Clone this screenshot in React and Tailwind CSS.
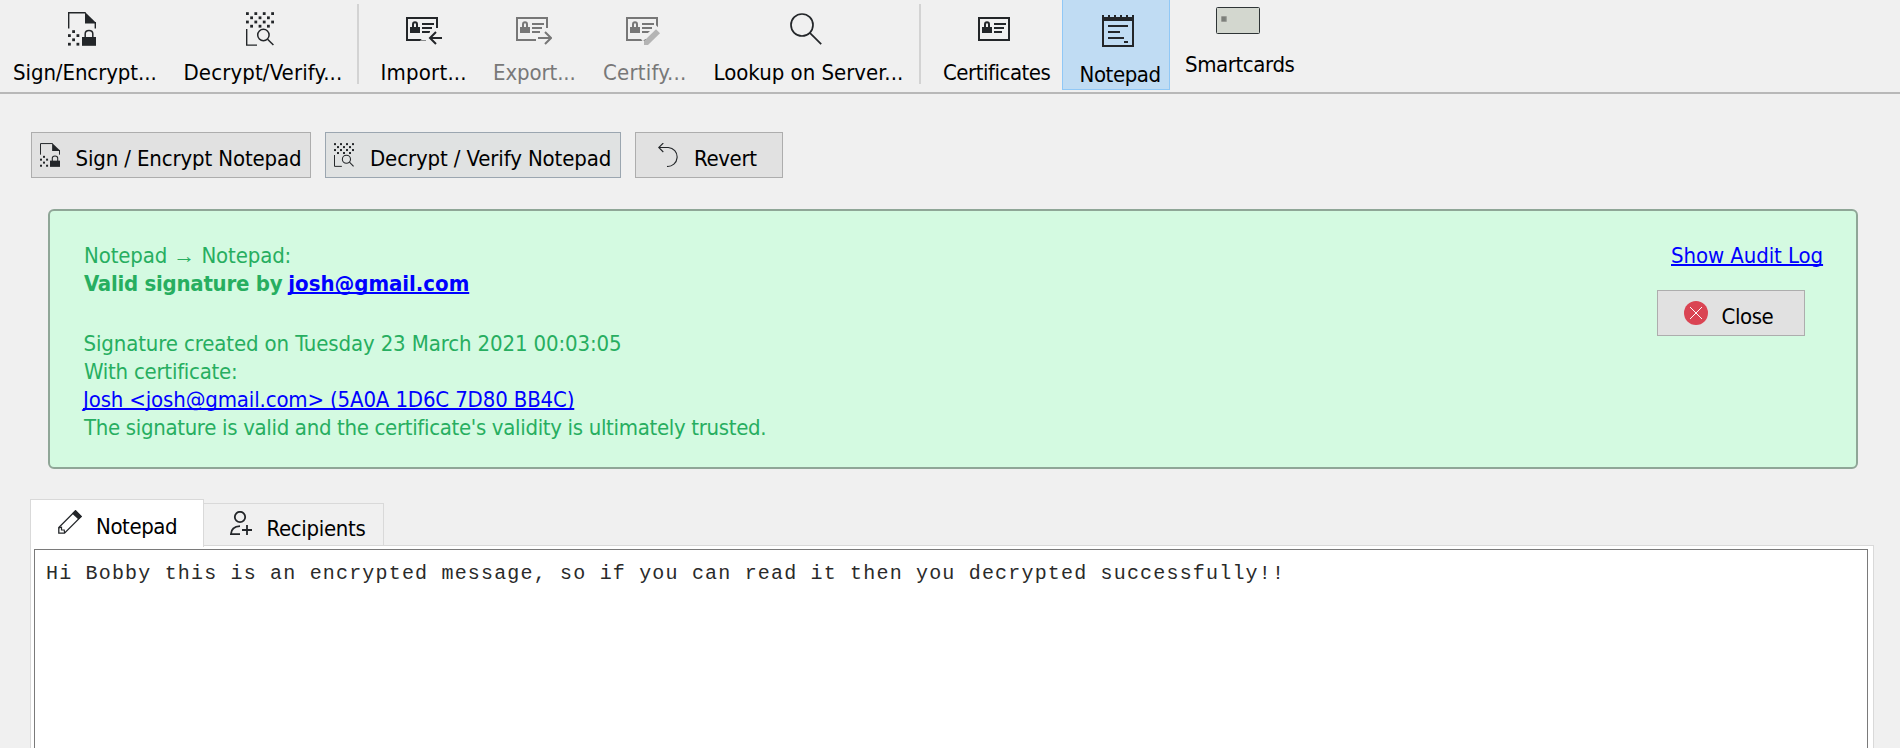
const INK = '#232629';

function Dots({ points, size = 2.8, fill = INK }) {
  return points.map(([x, y]) => (
    <rect key={`${x}-${y}`} x={x - size / 2} y={y - size / 2} width={size} height={size} fill={fill} />
  ));
}

function EncryptIcon({ className }) {
  return (
    <svg viewBox="0 0 28 34" preserveAspectRatio="none" fill="none" className={className}>
      <path d="M.7 16.5V.8H17.5M27.3 10v6.5" stroke={INK} strokeWidth="1.4" />
      <path d="M17 .1 28 10.8V11.5H17Z" fill={INK} />
      <Dots points={[[5.6, 19.6], [1.4, 23.6], [9.9, 23.6], [5.6, 27.8], [1.4, 32.2], [9.9, 32.2]]} />
      <rect x="14" y="25" width="14" height="8.8" fill={INK} />
      <path d="M17.2 25.5v-3.8c0-4.4 7.6-4.4 7.6 0v3.8" stroke={INK} strokeWidth="1.5" />
    </svg>
  );
}

const CHECKER = [1.6, 10].flatMap((y) => [
  [1.4, y], [9.8, y], [18.2, y], [26.6, y], [5.6, y + 4.2], [14, y + 4.2], [22.4, y + 4.2],
]);

function DecryptIcon({ className }) {
  return (
    <svg viewBox="0 0 28 34" preserveAspectRatio="none" fill="none" className={className}>
      <Dots points={CHECKER} />
      <path d="M.7 17v16.1H11" stroke={INK} strokeWidth="1.4" />
      <circle cx="17.4" cy="23" r="5.7" stroke={INK} strokeWidth="1.5" />
      <path d="m21.6 27.2 5.8 5.8" stroke={INK} strokeWidth="1.5" />
    </svg>
  );
}

function CardIcon({ className, color = INK, cut = true, children }) {
  return (
    <svg viewBox="0 0 36 28" fill="none" className={className}>
      <path d={cut ? 'M31 11V1H1V23H20' : 'M1 1H31V23H1Z'} stroke={color} strokeWidth="2" />
      <rect x="4" y="10" width="10" height="6" fill={color} />
      <path d="M7 10.5V7.4C7 4.6 11 4.6 11 7.4V10.5" stroke={color} strokeWidth="2" />
      <path d="M16 7H28M16 11H26M16 15H24" stroke={color} strokeWidth="2" />
      {children}
    </svg>
  );
}

function ImportIcon({ className }) {
  return (
    <CardIcon className={className}>
      <path d="M29.5 14 21 21h15M29.5 28 21 21" stroke="#f0f0f0" strokeWidth="5" />
      <path d="M36 21H24M30 15 24 21 30 27" stroke={INK} strokeWidth="2" />
    </CardIcon>
  );
}

function ExportIcon({ className }) {
  return (
    <CardIcon className={className} color="#777777">
      <path d="M22 21H34.5M29 15 35 21 29 27" stroke="#777777" strokeWidth="2" />
    </CardIcon>
  );
}

function CertifyIcon({ className }) {
  return (
    <CardIcon className={className} color="#777777">
      <path d="M16 23.4 30 10l5.5 5.5" stroke="#f0f0f0" strokeWidth="2.5" />
      <path d="M18 24 30 12.2 34 16.2 22 28H18Z" fill="#b4b4b4" />
    </CardIcon>
  );
}

function LookupIcon({ className }) {
  return (
    <svg viewBox="0 0 32 32" fill="none" className={className}>
      <circle cx="12" cy="12" r="11" stroke={INK} strokeWidth="1.7" />
      <path d="M19.6 19.6 31.2 31.2" stroke={INK} strokeWidth="1.7" />
    </svg>
  );
}

function NotepadIcon({ className }) {
  return (
    <svg viewBox="0 0 32 32" fill="none" className={className}>
      <path d="M1 1V31H31V1" stroke={INK} strokeWidth="2" />
      <path d="M0 4H32" stroke={INK} strokeWidth="4" />
      <path d="M1 0V3M31 0V3M7 0V3M13 0V3M19 0V3M25 0V3" stroke={INK} strokeWidth="2" />
      <path d="M6 11H26M6 17H18M6 23H22M22 27H26" stroke={INK} strokeWidth="2" />
    </svg>
  );
}

function SmartcardIcon({ className }) {
  return (
    <svg viewBox="0 0 44 27" fill="none" className={className}>
      <rect x=".5" y=".5" width="43" height="26" rx="1" fill="#d3d7cf" stroke="#2e3436" />
      <rect x="5" y="9" width="6" height="6" rx="1" fill="#a0a29d" />
      <rect x="5.8" y="9.8" width="4" height="4.4" fill="#7c7f7a" />
    </svg>
  );
}

function RevertIcon({ className }) {
  return (
    <svg viewBox="0 0 20 24" fill="none" stroke={INK} className={className}>
      <path d="M5.3 0 .7 4.5 5.3 9M.7 4.5H10.3A9.4 9.4 0 0 1 9 23.4" strokeWidth="1.1" />
    </svg>
  );
}

function CloseIcon({ className }) {
  return (
    <svg viewBox="0 0 24 24" fill="none" className={className}>
      <circle cx="12" cy="12" r="12" fill="#da4453" />
      <path d="m6 6 12 12M18 6 6 18" stroke="#fcfcfc" strokeWidth="1" />
    </svg>
  );
}

function PencilIcon({ className }) {
  return (
    <svg viewBox="0 0 24 24" fill="none" className={className}>
      <path d="M.8 23.2V17.5L17.5.8 23.2 6.5 6.5 23.2Z" stroke={INK} strokeWidth="1.3" />
      <path d="M17.5 0 24 6.5 20.5 9.5 14 3.5Z" fill={INK} />
      <path d="M.8 17.8 3.5 17.2V20H6.2L6.6 23" stroke={INK} strokeWidth="1.2" />
    </svg>
  );
}

function RecipientsIcon({ className }) {
  return (
    <svg viewBox="0 0 22 24" fill="none" stroke={INK} className={className}>
      <circle cx="10" cy="6" r="5.2" strokeWidth="1.8" />
      <path d="M10 15.2C4.500 15.500 1.2 18 .9 23.2H10" strokeWidth="1.8" />
      <path d="M12 19H22M17 14V24" strokeWidth="1.8" />
    </svg>
  );
}

function ToolItem({ className, iconArea = 'h-[59px]', icon, labelClass, children }) {
  return (
    <button type="button" className={`flex shrink-0 flex-col items-start text-left ${className}`}>
      <span className={`block ${iconArea}`}>{icon}</span>
      <span className={`block whitespace-pre leading-7 ${labelClass}`}>{children}</span>
    </button>
  );
}

function Separator() {
  return <div className="mt-1 h-20 w-0.5 shrink-0 bg-[#d3d3d3]" />;
}

function Toolbar() {
  return (
    <header className="flex h-[94px] items-start border-b-2 border-[#b8b8b8]">
      <ToolItem className="w-[171px]" icon={<EncryptIcon className="mt-3 ml-[68px] h-[34px] w-7" />} labelClass="ml-[13px] tracking-[-0.08px]">
        Sign/Encrypt...
      </ToolItem>
      <ToolItem className="w-[186px]" icon={<DecryptIcon className="mt-3 ml-[75px] h-[34px] w-7" />} labelClass="ml-[12.500px] tracking-[0.125px]">
        Decrypt/Verify...
      </ToolItem>
      <Separator />
      <ToolItem className="ml-2 w-[113px]" icon={<ImportIcon className="mt-[17px] ml-[39px] h-7 w-9" />} labelClass="ml-[13.500px] tracking-[0.2px]">
        Import...
      </ToolItem>
      <ToolItem className="w-[110px]" icon={<ExportIcon className="mt-[17px] ml-9 h-7 w-9" />} labelClass="ml-[13px] tracking-[-0.1px] text-[#787878]">
        Export...
      </ToolItem>
      <ToolItem className="w-[111px]" icon={<CertifyIcon className="mt-[17px] ml-9 h-7 w-9" />} labelClass="ml-[13px] tracking-[0.2px] text-[#787878]">
        Certify...
      </ToolItem>
      <ToolItem className="w-[218px]" icon={<LookupIcon className="mt-[13px] ml-[89px] size-8" />} labelClass="ml-[12.500px]">
        Lookup on Server...
      </ToolItem>
      <Separator />
      <ToolItem className="ml-[9px] w-[132px]" icon={<CardIcon cut={false} className="mt-[17px] ml-12 h-7 w-9" />} labelClass="ml-[13px] tracking-[-0.48px]">
        Certificates
      </ToolItem>
      <ToolItem
        className="h-[90px] w-[108px] border border-t-0 border-[#90c8f6] bg-[#c0dcf3]"
        iconArea="h-[61px]"
        icon={<NotepadIcon className="mt-[15px] ml-[39px] size-8" />}
        labelClass="ml-[16.500px] tracking-[-0.42px]"
      >
        Notepad
      </ToolItem>
      <ToolItem className="w-[140px]" iconArea="h-[51px]" icon={<SmartcardIcon className="mt-[7px] ml-[46px] h-[27px] w-11" />} labelClass="ml-[15px] tracking-[-0.4px]">
        Smartcards
      </ToolItem>
    </header>
  );
}

function PushButton({ className, icon, labelClass, children }) {
  return (
    <button type="button" className={`flex h-[46px] shrink-0 items-start border ${className}`}>
      {icon}
      <span className={`mt-3 whitespace-pre leading-7 ${labelClass}`}>{children}</span>
    </button>
  );
}

const LINK = 'text-[#0000ff] underline decoration-2 underline-offset-[1px] [text-decoration-skip-ink:none]';

function ResultPanel() {
  return (
    <section className="mt-[31px] mr-[42px] ml-12 flex h-[260px] justify-between rounded-md border-2 border-[#8fa697] bg-[#d4fae1] pl-[33px] text-[#27ae60]">
      <div className="mt-[31px] whitespace-pre leading-7">
        <p className="h-7 pl-px tracking-[-0.13px]">
          Notepad <span className="font-['Liberation_Sans',sans-serif] leading-none">→</span> Notepad:
        </p>
        <p className="mb-8 pl-px font-bold">
          <span className="tracking-[-0.26px]">Valid signature by</span>
          <a href="#sender" className={`ml-1 pl-[2px] tracking-[-0.02px] ${LINK}`}>josh@gmail.com</a>
        </p>
        <p className="pl-[0.5px] tracking-[-0.125px]">Signature created on Tuesday 23 March 2021 00:03:05</p>
        <p className="pl-px tracking-[-0.25px]">With certificate:</p>
        <p>
          <a href="#certificate" className={`tracking-[-0.15px] ${LINK}`}>{'Josh <josh@gmail.com> (5A0A 1D6C 7D80 BB4C)'}</a>
        </p>
        <p className="pl-px tracking-[-0.326px]">The signature is valid and the certificate's validity is ultimately trusted.</p>
      </div>
      <div className="mt-[31px] flex w-[199px] flex-col">
        <a href="#audit" className={`ml-[14px] self-start leading-7 tracking-[-0.08px] ${LINK}`}>Show Audit Log</a>
        <PushButton
          className="mt-5 w-[148px] border-[#adadad] bg-[#e1e1e1] pl-[26px] text-black"
          icon={<CloseIcon className="mt-[10px] size-6" />}
          labelClass="ml-[13.500px] tracking-[-0.43px]"
        >
          Close
        </PushButton>
      </div>
    </section>
  );
}

export default function App() {
  return (
    <div className="flex h-[748px] w-[1900px] flex-col overflow-hidden bg-[#f0f0f0] font-['DejaVu_Sans_Condensed','DejaVu_Sans',sans-serif] text-[22px] text-black">
      <Toolbar />
      <div className="mt-[38px] ml-[31px] flex gap-[14px]">
        <PushButton className="w-[280px] border-[#adadad] bg-[#e1e1e1] pl-2" icon={<EncryptIcon className="mt-[10px] h-6 w-5" />} labelClass="ml-[15.500px] tracking-[-0.136px]">
          Sign / Encrypt Notepad
        </PushButton>
        <PushButton className="w-[296px] border-[#9ba6b0] bg-[#e0e2e2] pl-2" icon={<DecryptIcon className="mt-[10px] h-6 w-5" />} labelClass="ml-4 tracking-[-0.12px]">
          Decrypt / Verify Notepad
        </PushButton>
        <PushButton className="w-[148px] border-[#adadad] bg-[#e1e1e1] pl-[22px]" icon={<RevertIcon className="mt-[10px] h-6 w-5" />} labelClass="ml-4 tracking-[-0.35px]">
          Revert
        </PushButton>
      </div>
      <ResultPanel />
      <nav className="z-10 mt-[30px] ml-[30px] flex h-[46px] items-start">
        <button type="button" className="-mb-px flex h-[48px] w-[174px] items-start border border-b-0 border-[#d9d9d9] bg-white pl-[27px]">
          <PencilIcon className="mt-[10px] size-6" />
          <span className="mt-[13px] ml-[14px] leading-7 tracking-[-0.42px]">Notepad</span>
        </button>
        <button type="button" className="mt-1 flex h-[42px] w-[180px] items-start border-t border-r border-[#d9d9d9] bg-[#f0f0f0] pl-[26px]">
          <RecipientsIcon className="mt-[7px] h-6 w-[22px]" />
          <span className="mt-[11px] ml-[14.500px] leading-7 tracking-[-0.32px]">Recipients</span>
        </button>
      </nav>
      <main className="mr-[26px] ml-[30px] flex flex-1 border border-b-0 border-[#d9d9d9] bg-white pt-[3px] pr-[5px] pl-[3px]">
        <div className="flex-1 border border-b-0 border-[#7a7a7a] bg-white pt-[10px] pl-[11px] font-['Liberation_Mono',monospace] text-[20px] leading-7 tracking-[1.18px] whitespace-pre text-[#2a2a2a]">
          Hi Bobby this is an encrypted message, so if you can read it then you decrypted successfully!!
        </div>
      </main>
    </div>
  );
}
